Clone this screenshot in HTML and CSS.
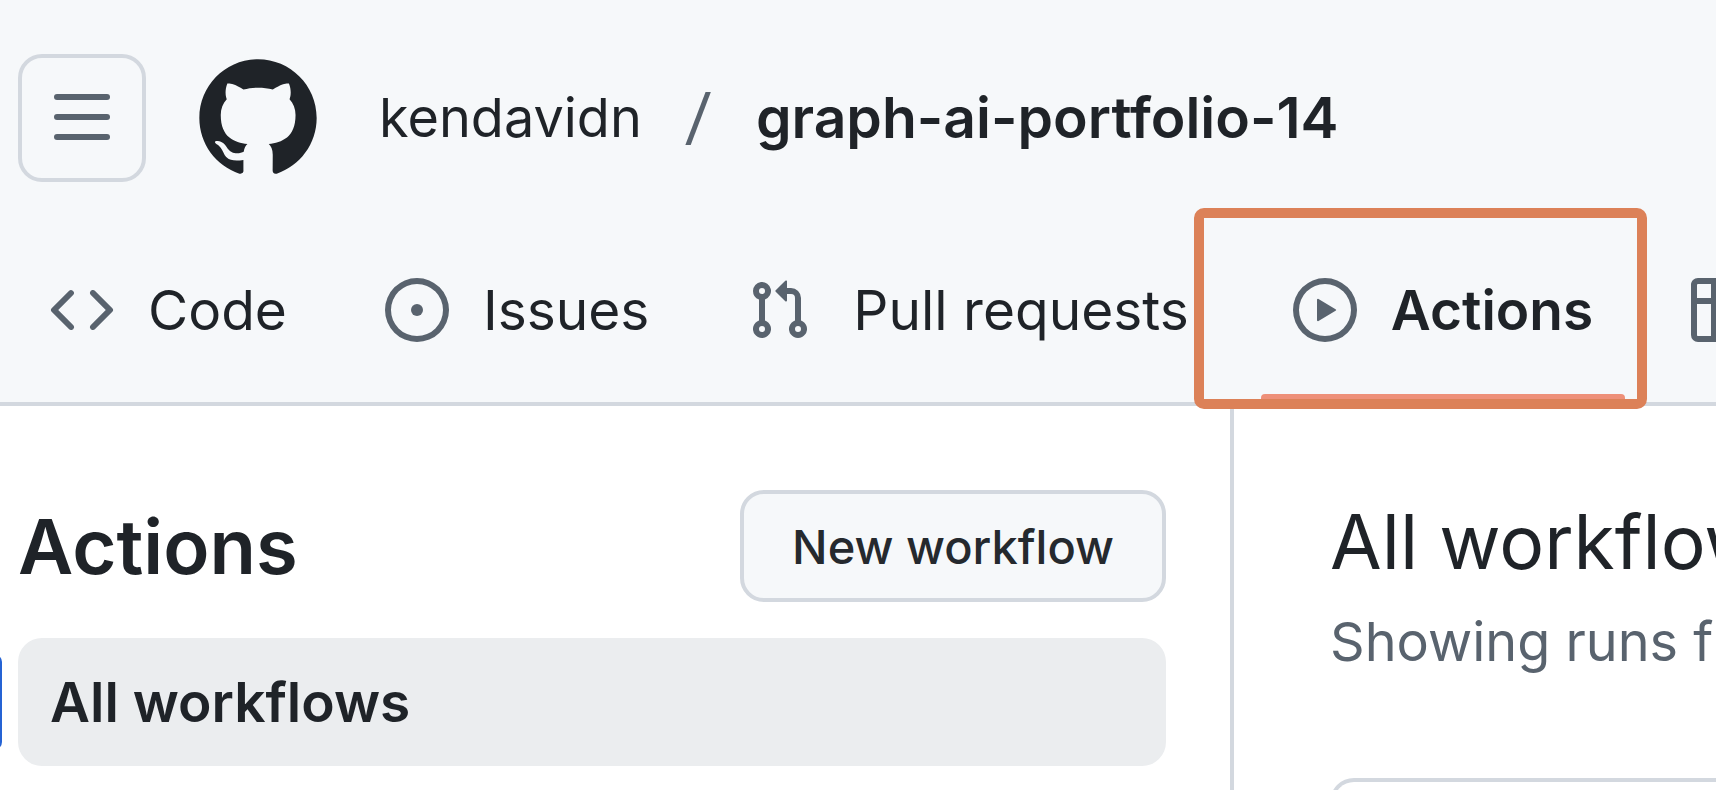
FILE: index.html
```html
<!DOCTYPE html>
<html lang="en">
<head>
<meta charset="utf-8">
<title>Actions</title>
<link rel="stylesheet" href="styles.css">
</head>
<body>
<header class="header">
  <div class="topbar">
    <button class="menu-button" type="button" aria-label="Open menu">
      <svg class="icon" viewBox="0 0 64 64" aria-hidden="true"><rect x="4" y="8" width="56" height="6" rx="3"/><rect x="4" y="28" width="56" height="6" rx="3"/><rect x="4" y="48" width="56" height="6" rx="3"/></svg>
    </button>
    <a class="logo" href="#" aria-label="Home">
      <svg class="logo-mark" viewBox="0 0 24 24" aria-hidden="true"><path d="M12 1C5.9225 1 1 5.9225 1 12C1 16.8675 4.14875 20.9787 8.52125 22.4362C9.07125 22.5325 9.2775 22.2025 9.2775 21.9137C9.2775 21.6525 9.26375 20.7862 9.26375 19.865C6.5 20.3737 5.785 19.1912 5.565 18.5725C5.44125 18.2562 4.905 17.28 4.4375 17.0187C4.0525 16.8125 3.5025 16.3037 4.42375 16.29C5.29 16.2762 5.90875 17.0875 6.115 17.4175C7.105 19.0812 8.68625 18.6137 9.31875 18.325C9.415 17.61 9.70375 17.1287 10.02 16.8537C7.5725 16.5787 5.015 15.63 5.015 11.4225C5.015 10.2262 5.44125 9.23625 6.1425 8.46625C6.0325 8.19125 5.6475 7.06375 6.2525 5.55125C6.2525 5.55125 7.17375 5.2625 9.2775 6.67875C10.1575 6.43125 11.0925 6.3075 12.0275 6.3075C12.9625 6.3075 13.8975 6.43125 14.7775 6.67875C16.8813 5.24875 17.8025 5.55125 17.8025 5.55125C18.4075 7.06375 18.0225 8.19125 17.9125 8.46625C18.6138 9.23625 19.04 10.2125 19.04 11.4225C19.04 15.6437 16.4688 16.5787 14.0213 16.8537C14.42 17.1975 14.7638 17.8575 14.7638 18.8888C14.7638 20.36 14.75 21.5425 14.75 21.9137C14.75 22.2025 14.9563 22.5462 15.5063 22.4362C19.8513 20.9787 23 16.8537 23 12C23 5.9225 18.0775 1 12 1Z"/></svg>
    </a>
    <nav class="crumbs" aria-label="Breadcrumb">
      <a class="crumb" href="#">kendavidn</a>
      <span class="crumb-slash">/</span>
      <a class="crumb crumb-current" href="#">graph-ai-portfolio-14</a>
    </nav>
  </div>
  <nav class="tabs" aria-label="Repository">
    <a class="tab" href="#">
      <svg class="icon" viewBox="0 0 16 16" aria-hidden="true"><path d="m11.28 3.22 4.25 4.25a.75.75 0 0 1 0 1.06l-4.25 4.25a.749.749 0 0 1-1.275-.326.749.749 0 0 1 .215-.734L13.94 8l-3.72-3.72a.749.749 0 0 1 .326-1.275.749.749 0 0 1 .734.215Zm-6.56 0a.751.751 0 0 1 1.042.018.751.751 0 0 1 .018 1.042L2.06 8l3.72 3.72a.749.749 0 0 1-.326 1.275.749.749 0 0 1-.734-.215L.47 8.53a.75.75 0 0 1 0-1.06Z"/></svg>
      <span>Code</span>
    </a>
    <a class="tab" href="#">
      <svg class="icon" viewBox="0 0 16 16" aria-hidden="true"><path d="M8 9.5a1.5 1.5 0 1 0 0-3 1.5 1.5 0 0 0 0 3Z"/><path d="M8 0a8 8 0 1 1 0 16A8 8 0 0 1 8 0ZM1.5 8a6.5 6.5 0 1 0 13 0 6.5 6.5 0 0 0-13 0Z"/></svg>
      <span>Issues</span>
    </a>
    <a class="tab tab-pulls" href="#">
      <svg class="icon" viewBox="0 0 16 16" aria-hidden="true"><path d="M1.5 3.25a2.25 2.25 0 1 1 3 2.122v5.256a2.251 2.251 0 1 1-1.5 0V5.372A2.25 2.25 0 0 1 1.5 3.25Zm5.677-.177L9.573.677A.25.25 0 0 1 10 .854V2.5h1A2.5 2.5 0 0 1 13.5 5v5.628a2.251 2.251 0 1 1-1.5 0V5a1 1 0 0 0-1-1h-1v1.646a.25.25 0 0 1-.427.177L7.177 3.427a.25.25 0 0 1 0-.354ZM3.75 2.5a.75.75 0 1 0 0 1.5.75.75 0 0 0 0-1.5Zm0 9.5a.75.75 0 1 0 0 1.5.75.75 0 0 0 0-1.5Zm8.25.75a.75.75 0 1 0 1.5 0 .75.75 0 0 0-1.5 0Z"/></svg>
      <span>Pull requests</span>
    </a>
    <a class="tab tab-current" href="#" aria-current="page">
      <svg class="icon" viewBox="0 0 16 16" aria-hidden="true"><path d="M8 0a8 8 0 1 1 0 16A8 8 0 0 1 8 0ZM1.5 8a6.5 6.5 0 1 0 13 0 6.5 6.5 0 0 0-13 0Zm4.879-2.773 4.264 2.559a.25.25 0 0 1 0 .428l-4.264 2.559A.25.25 0 0 1 6 10.559V5.442a.25.25 0 0 1 .379-.215Z"/></svg>
      <span>Actions</span>
    </a>
    <a class="tab" href="#" aria-label="Projects">
      <svg class="icon" viewBox="0 0 16 16" aria-hidden="true"><path d="M0 1.75C0 .784.784 0 1.75 0h12.5C15.216 0 16 .784 16 1.75v12.5A1.75 1.75 0 0 1 14.25 16H1.75A1.75 1.75 0 0 1 0 14.25ZM6.5 6.5v8h7.75a.25.25 0 0 0 .25-.25V6.5Zm8-1.5V1.75a.25.25 0 0 0-.25-.25H6.5V5Zm-13 1.5v7.75c0 .138.112.25.25.25H5v-8ZM5 5V1.5H1.75a.25.25 0 0 0-.25.25V5Z"/></svg>
    </a>
  </nav>
</header>
<div class="layout">
  <aside class="sidebar">
    <div class="sidebar-head">
      <h2 class="sidebar-title">Actions</h2>
      <button class="button" type="button">New workflow</button>
    </div>
    <a class="side-link" href="#" aria-current="page">All workflows</a>
  </aside>
  <main class="content">
    <h1 class="content-title">All workflows</h1>
    <p class="content-note">Showing runs from all workflows</p>
    <div class="runs"></div>
  </main>
</div>
</body>
</html>
```
FILE: styles.css
```css
* { box-sizing: border-box; }

body {
  margin: 0;
  height: 100vh;
  display: flex;
  flex-direction: column;
  overflow: hidden;
  background: #fff;
  color: #1f2328;
  font-family: Inter, "Liberation Sans", sans-serif;
  font-size: 54px;
  line-height: 80px;
  white-space: nowrap;
}

a { color: inherit; text-decoration: none; }

.header {
  flex: none;
  padding: 54px 18px 0;
  background: #f6f8fa;
  border-bottom: 4px solid #d3d8df;
}

.topbar { display: flex; align-items: center; }

.icon {
  flex: none;
  width: 64px;
  height: 64px;
  fill: #59636e;
}

.menu-button {
  display: flex;
  align-items: center;
  justify-content: center;
  width: 128px;
  height: 128px;
  padding: 0;
  border: 4px solid #d3d8df;
  border-radius: 24px;
  background: transparent;
}

.logo { display: flex; margin-left: 48px; }

.logo-mark { width: 128px; height: 128px; fill: #1f2328; }

.crumbs {
  display: flex;
  align-items: center;
  gap: 43px;
  margin-left: 57px;
}

.crumb-slash {
  color: #59636e;
  font-family: Roboto, sans-serif;
  font-size: 68px;
  font-weight: 400;
}

.crumb-current { font-size: 57px; font-weight: 600; }

.tabs {
  display: flex;
  gap: 34px;
  margin-top: 36px;
  font-size: 55px;
}

.tab {
  position: relative;
  display: flex;
  flex: none;
  align-items: center;
  gap: 34px;
  height: 184px;
  padding: 0 32px;
}

.tab-pulls { gap: 42px; padding-right: 38px; }

.tab-current { font-weight: 600; }

.tab-current::before {
  content: "";
  position: absolute;
  left: 0;
  right: 0;
  bottom: 0;
  height: 8px;
  border-radius: 4px 4px 0 0;
  background: #ee9079;
}

.tab-current::after {
  content: "";
  position: absolute;
  inset: -10px -22px -7px -67px;
  border: 10px solid #dc8158;
  border-radius: 10px;
}

.layout {
  flex: 1;
  min-height: 0;
  display: grid;
  grid-template-columns: minmax(0, 1234fr) minmax(0, 482fr);
}

.sidebar {
  padding: 84px 64px 24px 18px;
  border-right: 4px solid #d3d8df;
}

.sidebar-head {
  display: flex;
  align-items: center;
  justify-content: space-between;
  margin-bottom: 36px;
}

.sidebar-title { margin: 0; font-size: 76px; font-weight: 600; }

.button {
  height: 112px;
  padding: 0 48px;
  border: 4px solid #d3d8df;
  border-radius: 24px;
  background: #f6f8fa;
  color: #25292e;
  font: 500 47px Inter, "Liberation Sans", sans-serif;
}

.side-link {
  position: relative;
  display: block;
  padding: 24px 32px;
  border-radius: 24px;
  background: #ebedef;
  font-size: 55px;
  font-weight: 600;
}

.side-link::before {
  content: "";
  position: absolute;
  left: -32px;
  top: 16px;
  bottom: 16px;
  width: 16px;
  border-radius: 24px;
  background: #2563d4;
}

.content {
  min-height: 0;
  padding: 80px 0 0 96px;
  overflow: hidden;
}

.content-title {
  margin: 0;
  font-size: 75px;
  font-weight: 400;
  line-height: 112px;
}

.content-note { margin: 4px 0 96px; color: #59636e; }

.runs {
  height: 64px;
  border-top: 4px solid #d3d8df;
  border-left: 4px solid #d3d8df;
  border-radius: 24px 0 0 0;
}
```
